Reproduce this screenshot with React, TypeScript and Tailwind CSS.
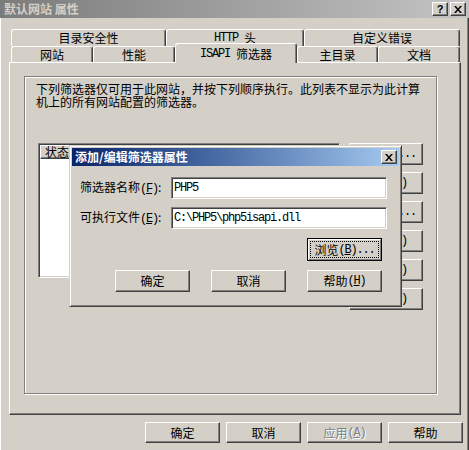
import React from "react";

const raised =
  "border border-t-white border-l-white border-r-[#404040] border-b-[#404040] shadow-[inset_-1px_-1px_0_#808080]";
const sunken =
  "border border-t-[#808080] border-l-[#808080] border-r-white border-b-white shadow-[inset_1px_1px_0_#404040,inset_-1px_-1px_0_#d4d0c8]";
const mono = "font-['Liberation_Mono',monospace] tracking-[-1.2px]";

function M({ c }: { c: string }) {
  return (
    <span className={mono}>
      (<span className="underline underline-offset-[1px]">{c}</span>)
    </span>
  );
}

function XGlyph({ className = "" }: { className?: string }) {
  return (
    <svg width="8" height="7" viewBox="0 0 8 7" className={className}>
      <path d="M0 0h2l2 2.5L6 0h2L5 3.5 8 7H6L4 4.5 2 7H0l3-3.5z" fill="#000" />
    </svg>
  );
}

function Tab({
  w,
  children,
  selected = false,
}: {
  w: string;
  children: React.ReactNode;
  selected?: boolean;
}) {
  if (selected) {
    return (
      <div
        className={`${w} relative z-10 -mt-[3px] h-[20px] flex items-start justify-center pt-[3px] bg-[#d4d0c8] border-t border-l border-white border-r border-r-[#404040] rounded-t-[3px] shadow-[inset_-1px_0_0_#808080]`}
      >
        {children}
      </div>
    );
  }
  return (
    <div
      className={`${w} h-full flex items-center justify-center bg-[#d4d0c8] border-t border-l border-white border-r border-r-[#404040] rounded-t-[3px] shadow-[inset_-1px_0_0_#808080]`}
    >
      {children}
    </div>
  );
}

function Btn({
  children,
  w = "w-[75px]",
  h = "h-[22px]",
  disabled = false,
}: {
  children: React.ReactNode;
  w?: string;
  h?: string;
  disabled?: boolean;
}) {
  return (
    <div
      className={`${w} ${h} ${raised} flex items-center justify-center whitespace-nowrap overflow-hidden ${
        disabled ? "text-[#808080] [text-shadow:1px_1px_0_#fff]" : "text-black"
      }`}
    >
      {children}
    </div>
  );
}

export default function App() {
  return (
    <div className="w-[469px] h-[450px] bg-[#d4d0c8] relative overflow-hidden flex flex-col font-['Noto_Sans_CJK_SC',sans-serif] text-[12px] leading-[14px] text-black">
      {/* Title bar (inactive) */}
      <div className="h-[18px] shrink-0 flex items-center justify-between bg-gradient-to-r from-[#7c7c7c] to-[#c4c4c4] pl-[4px] pr-[3px]">
        <span className="font-bold text-[#d4d0c8] whitespace-nowrap">默认网站 属性</span>
        <div className="flex gap-[2px]">
          <div className={`w-[16px] h-[14px] ${raised} bg-[#d4d0c8] flex items-center justify-center`}>
            <span className="font-bold text-[11px] leading-none font-['Liberation_Sans',sans-serif]">?</span>
          </div>
          <div className={`w-[16px] h-[14px] ${raised} bg-[#d4d0c8] flex items-center justify-center`}>
            <XGlyph />
          </div>
        </div>
      </div>

      {/* Window body */}
      <div className="flex-1 flex flex-col shadow-[inset_1px_0_0_#fff,inset_-1px_0_0_#404040,inset_-2px_0_0_#808080]">
        {/* Tabs */}
        <div className="ml-[11px] mt-[11px] w-[449px] flex flex-col">
          <div className="flex h-[17px]">
            <Tab w="w-[155px]">目录安全性</Tab>
            <Tab w="w-[138px]">
              <span className={mono}>HTTP&nbsp;</span>头
            </Tab>
            <Tab w="w-[156px]">自定义错误</Tab>
          </div>
          <div className="flex h-[16px]">
            <Tab w="w-[82px]">网站</Tab>
            <Tab w="w-[82px]">性能</Tab>
            <Tab w="w-[122px]" selected>
              <span className={mono}>ISAPI&nbsp;</span>筛选器
            </Tab>
            <Tab w="w-[81px]">主目录</Tab>
            <Tab w="w-[82px]">文档</Tab>
          </div>
        </div>

        {/* Tab panel */}
        <div className={`ml-[9px] w-[452px] h-[353px] ${raised}`}>
          <div className="ml-[14px] mt-[13px] w-[413px] h-[318px] border border-[#808080] shadow-[inset_1px_1px_0_#fff,1px_1px_0_#fff]">
            <div className="ml-[11px] pt-[5px] flex flex-col">
              <div className="h-[13px] leading-[13px] whitespace-nowrap">
                下列筛选器仅可用于此网站，并按下列顺序执行。此列表不显示为此计算
              </div>
              <div className="h-[13px] leading-[13px] whitespace-nowrap">
                机上的所有网站配置的筛选器。
              </div>
            </div>
            <div className="flex ml-[13px] mt-[35px]">
              <div className={`w-[302px] h-[135px] bg-white ${sunken} p-[1px]`}>
                <div className="flex h-[14px] bg-[#d4d0c8]">
                  <div className={`w-[90px] h-full ${raised} pl-[4px] flex items-center`}>状态</div>
                  <div className={`flex-1 h-full ${raised}`}></div>
                </div>
              </div>
              <div className="ml-[9px] flex flex-col gap-[7px]">
                <Btn w="w-[74px]">
                  添加<M c="D" />
                  <span className={mono}>...</span>
                </Btn>
                <Btn w="w-[74px]">
                  删除<M c="R" />
                </Btn>
                <Btn w="w-[74px]">
                  编辑<M c="E" />
                  <span className={mono}>...</span>
                </Btn>
                <Btn w="w-[74px]">
                  禁用<M c="I" />
                </Btn>
                <Btn w="w-[74px]">
                  上移<M c="U" />
                </Btn>
                <Btn w="w-[74px]">
                  下移<M c="O" />
                </Btn>
              </div>
            </div>
          </div>
        </div>

        {/* Bottom buttons */}
        <div className="mt-[7px] flex justify-end gap-[6px] pr-[6px]">
          <Btn h="h-[21px]">确定</Btn>
          <Btn h="h-[21px]">取消</Btn>
          <Btn h="h-[21px]" disabled>
            应用<M c="A" />
          </Btn>
          <Btn h="h-[21px]">帮助</Btn>
        </div>
      </div>

      {/* Overlaid dialog */}
      <div className="absolute left-[69px] top-[145px] w-[333px] h-[162px] bg-[#d4d0c8] border border-t-[#d4d0c8] border-l-[#d4d0c8] border-r-[#404040] border-b-[#404040] shadow-[inset_1px_1px_0_#fff,inset_-1px_-1px_0_#808080] p-[2px] flex flex-col">
        <div className="h-[18px] shrink-0 flex items-center justify-between bg-gradient-to-r from-[#0a246a] to-[#a6caf0] pl-[3px] pr-[2px]">
          <span className="font-bold text-white whitespace-nowrap">添加/编辑筛选器属性</span>
          <div className={`w-[16px] h-[14px] ${raised} bg-[#d4d0c8] flex items-center justify-center`}>
            <XGlyph />
          </div>
        </div>
        <div className="flex flex-col pt-[11px]">
          <div className="flex items-center pl-[8px]">
            <div className="w-[91px] whitespace-nowrap">
              筛选器名称<M c="F" />:
            </div>
            <div className={`w-[216px] h-[22px] bg-white ${sunken} flex items-center pl-[2px]`}>
              <span className={mono}>PHP5</span>
            </div>
          </div>
          <div className="flex items-center pl-[8px] mt-[8px]">
            <div className="w-[91px] whitespace-nowrap">
              可执行文件<M c="E" />:
            </div>
            <div className={`w-[216px] h-[22px] bg-white ${sunken} flex items-center pl-[2px]`}>
              <span className={mono}>C:\PHP5\php5isapi.dll</span>
            </div>
          </div>
          <div className="mt-[9px] ml-[235px] w-[75px] h-[23px] border border-black">
            <div className="w-full h-full border border-t-white border-l-white border-r-[#808080] border-b-[#808080] p-[1px]">
              <div className="w-full h-full border border-dotted border-black flex items-center justify-center whitespace-nowrap">
                浏览<M c="B" />
                <span className={mono}>...</span>
              </div>
            </div>
          </div>
          <div className="mt-[9px] ml-[43px] flex gap-[21px]">
            <Btn>确定</Btn>
            <Btn>取消</Btn>
            <Btn>
              帮助<M c="H" />
            </Btn>
          </div>
        </div>
      </div>
    </div>
  );
}
